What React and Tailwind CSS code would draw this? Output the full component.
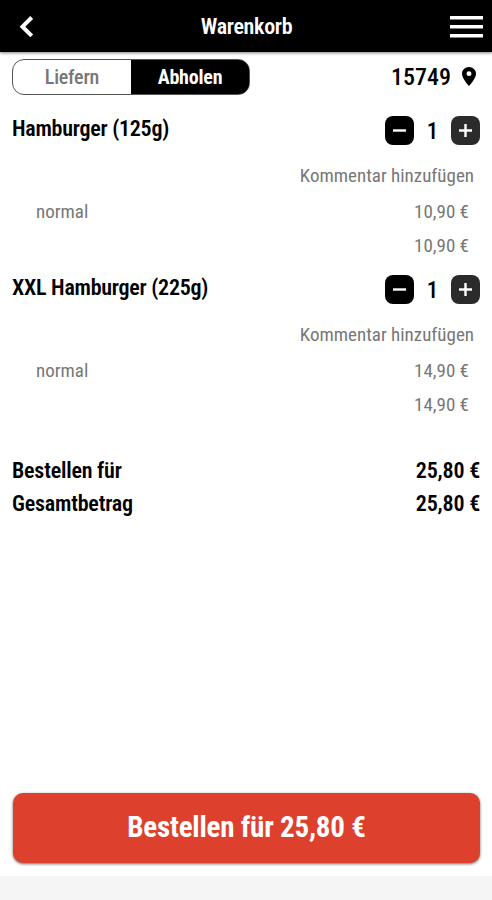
const items = [
  { name: 'Hamburger (125g)', count: 1, variant: 'normal', price: '10,90 €' },
  { name: 'XXL Hamburger (225g)', count: 1, variant: 'normal', price: '14,90 €' },
]

function Header() {
  return (
    <header className="h-[52px] shrink-0 bg-black flex items-center justify-between pl-[19px] pr-[9px] pt-[2px] shadow-[0_1px_3px_rgba(0,0,0,0.5)]">
      <svg className="w-[24px] h-[22px]" viewBox="0 0 24 22" fill="none" stroke="#fff" strokeWidth="4">
        <path d="M12.700 1.500 L3.500 10.700 L12.700 19.900" />
      </svg>
      <h1 className="text-[22px] tracking-[-0.3px] font-semibold text-white leading-none">Warenkorb</h1>
      <svg className="w-[33px] h-[22px]" viewBox="0 0 33 22" fill="#fff">
        <path d="M0 0H33V3.500H0zM0 9H33V12.500H0zM0 18H33V21.500H0z" />
      </svg>
    </header>
  )
}

function Counter({ count }) {
  return (
    <div className="flex items-center">
      <button className="size-[29px] rounded-lg bg-black flex items-center justify-center">
        <svg className="size-[13px]" viewBox="0 0 13 13" stroke="#fff" strokeWidth="2.4">
          <path d="M0 6.500H13" />
        </svg>
      </button>
      <span className="w-[37px] pt-[2px] leading-[29px] text-center text-[23px] font-medium">{count}</span>
      <button className="size-[29px] rounded-lg bg-[#2b2b2b] flex items-center justify-center">
        <svg className="size-[13px]" viewBox="0 0 13 13" stroke="#fff" strokeWidth="2.4">
          <path d="M0 6.500H13M6.500 0V13" />
        </svg>
      </button>
    </div>
  )
}

function Item({ name, count, variant, price }) {
  return (
    <section className="h-[159px] text-[19px] text-[#777]">
      <div className="h-[52px] flex items-center justify-between px-[12px] text-black">
        <h2 className="pb-[3px] text-[22px] tracking-[-0.25px] font-semibold">{name}</h2>
        <Counter count={count} />
      </div>
      <div className="h-[39px] pt-px flex items-center justify-end pr-[18px]">Kommentar hinzufügen</div>
      <div className="h-[34px] flex items-center justify-between pl-[36px] pr-[23px]">
        <span>{variant}</span>
        <span>{price}</span>
      </div>
      <div className="h-[35px] flex items-center justify-end pr-[23px]">{price}</div>
    </section>
  )
}

export default function App() {
  return (
    <div className="h-[900px] flex flex-col bg-white font-['Roboto_Condensed','Roboto',sans-serif] [font-stretch:75%] text-black">
      <Header />
      <div className="h-[52px] shrink-0 flex items-start justify-between pt-[7px] pl-[12px] pr-[16px]">
        <div className="w-[238px] h-9 flex rounded-xl border border-[#555] bg-[linear-gradient(to_right,white_50%,black_50%)] overflow-hidden text-[20px] leading-[34px] tracking-[-0.2px] text-center">
          <button className="flex-1 text-[#777] font-medium">Liefern</button>
          <button className="flex-1 bg-black text-white font-bold">Abholen</button>
        </div>
        <div className="h-9 flex items-center gap-[11px] text-[24px] font-medium">
          <span className="-mt-px">15749</span>
          <svg className="-mt-[2px] w-[14px] h-[19px]" viewBox="5 2 14 20" preserveAspectRatio="none">
            <path d="M12 2C8.130 2 5 5.130 5 9c0 5.250 7 13 7 13s7-7.750 7-13c0-3.870-3.130-7-7-7zm0 9.500a2.500 2.500 0 0 1 0-5 2.500 2.500 0 0 1 0 5z" />
          </svg>
        </div>
      </div>
      <main className="flex-1">
        {items.map((item) => (
          <Item key={item.name} {...item} />
        ))}
        <div className="mt-[32px] px-[12px] text-[22px] tracking-[-0.2px] font-semibold">
          <div className="h-[33px] flex items-center justify-between">
            <span>Bestellen für</span>
            <span>25,80 €</span>
          </div>
          <div className="h-8 flex items-center justify-between">
            <span>Gesamtbetrag</span>
            <span>25,80 €</span>
          </div>
        </div>
      </main>
      <button className="ml-[13px] mr-[12px] mb-[13px] h-[70px] shrink-0 rounded-[10px] bg-[#dd402d] text-white text-[29px] tracking-[-0.2px] font-bold shadow-[0_1px_3px_rgba(0,0,0,0.6)]">
        Bestellen für 25,80 €
      </button>
      <footer className="h-6 shrink-0 bg-[#f5f5f5]" />
    </div>
  )
}
